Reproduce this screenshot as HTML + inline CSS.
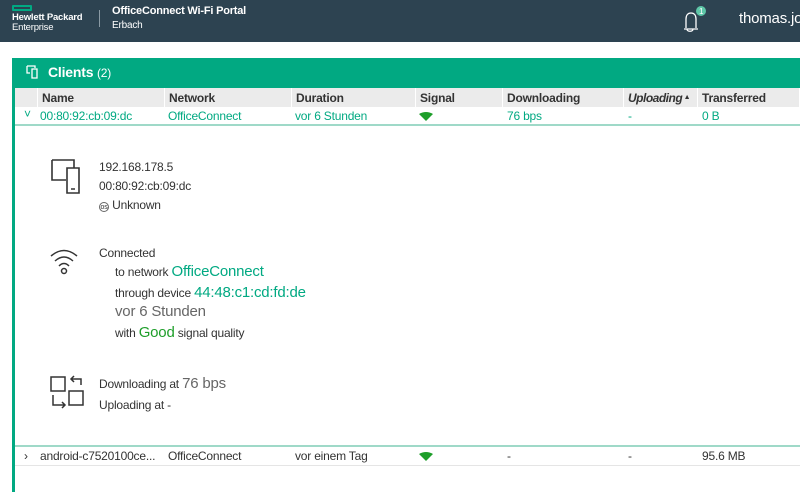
<!DOCTYPE html>
<html><head><meta charset="utf-8"><style>
*{margin:0;padding:0;box-sizing:border-box}
body{width:800px;height:492px;overflow:hidden;background:#fff;font-family:"Liberation Sans",sans-serif;font-size:12px;color:#333;position:relative;letter-spacing:-0.2px}
.hdr{position:absolute;left:0;top:0;width:800px;height:42px;background:#2d4351;color:#fff}
.abs{position:absolute;white-space:nowrap}
.panel{position:absolute;left:12px;top:58px;width:788px;height:434px;border-left:3px solid #01a982}
.band{position:absolute;left:12px;top:58px;width:788px;height:30px;background:#01a982}
.th{position:absolute;top:88px;height:19px;background:#ebebeb;border-right:1px solid #fff;font-weight:bold;color:#333;padding:3px 4px;font-size:12px;white-space:nowrap}
.td{position:absolute;padding:2px 4px;font-size:12px;white-space:nowrap}
.g{color:#01a982}
</style></head><body>
<div class="hdr">
 <div class="abs" style="left:12px;top:5px;width:20px;height:6px;border:2px solid #01a982;border-radius:1px"></div>
 <div class="abs" style="left:12px;top:13px;font-size:9.5px;font-weight:bold;line-height:10px">Hewlett Packard<br><span style="font-weight:normal">Enterprise</span></div>
 <div class="abs" style="left:99px;top:10px;width:1px;height:17px;background:#8a9aa4"></div>
 <div class="abs" style="left:112px;top:5px;font-size:11px;font-weight:bold">OfficeConnect Wi-Fi Portal</div>
 <div class="abs" style="left:112px;top:20px;font-size:10px">Erbach</div>
 <svg class="abs" style="left:678px;top:5px" width="28" height="28" viewBox="0 0 28 28"><path d="M6 24h14M9 24c0 3 6 3 6 0M8 23V14c0-4 2-6 5-6s5 2 5 6v9" fill="none" stroke="#fff" stroke-width="1.3"/><circle cx="23" cy="6" r="5" fill="#5ec7a8"/><text x="21" y="9" font-size="8" fill="#fff" font-family="Liberation Sans">1</text></svg>
 <div class="abs" style="left:739px;top:10px;font-size:15px">thomas.jo</div>
</div>
<div class="panel"></div>
<div class="band"></div>
<svg class="abs" style="left:26px;top:65px" width="16" height="14" viewBox="0 0 16 14"><path d="M1 1h8v2M1 1v7h3M6 4h5v9H6z" fill="none" stroke="#fff" stroke-width="1.3"/></svg>
<div class="abs" style="left:48px;top:64px;color:#fff;font-size:14px;font-weight:bold">Clients <span style="font-weight:normal;font-size:12px">(2)</span></div>
<div class="th" style="left:15px;width:23px"></div>
<div class="th" style="left:38px;width:127px">Name</div>
<div class="th" style="left:165px;width:127px">Network</div>
<div class="th" style="left:292px;width:124px">Duration</div>
<div class="th" style="left:416px;width:87px">Signal</div>
<div class="th" style="left:503px;width:121px">Downloading</div>
<div class="th" style="left:624px;width:74px;font-style:italic;letter-spacing:-0.5px">Uploading<span style="font-size:7px;font-style:normal;vertical-align:3px"> ▲</span></div>
<div class="th" style="left:698px;width:102px">Transferred</div>
<div class="abs" style="left:15px;top:107px;width:785px;height:19px;border-bottom:2px solid #9fd9c8"></div>
<div class="td g" style="left:20px;top:105px">˅</div>
<div class="td g" style="left:36px;top:107px">00:80:92:cb:09:dc</div>
<div class="td g" style="left:164px;top:107px">OfficeConnect</div>
<div class="td g" style="left:291px;top:107px">vor 6 Stunden</div>
<svg class="abs" style="left:419px;top:112px" width="14" height="9"><path d="M0 2Q7-2 14 2L7 9z" fill="#1e9e2a"/></svg>
<div class="td g" style="left:503px;top:107px">76 bps</div>
<div class="td g" style="left:624px;top:107px">-</div>
<div class="td g" style="left:698px;top:107px">0 B</div>
<svg class="abs" style="left:50px;top:158px" width="38" height="36" viewBox="0 0 38 36"><path d="M2 2h22v8M2 2v20h14M17 10h12v25H17zM21 31h4" fill="none" stroke="#333" stroke-width="1.6"/></svg>
<div class="abs" style="left:99px;top:158px;line-height:19px">192.168.178.5<br>00:80:92:cb:09:dc<br><span style="font-size:7px;border:1px solid #666;border-radius:50%;display:inline-block;width:10px;height:10px;text-align:center;line-height:9px">os</span> Unknown</div>
<svg class="abs" style="left:49px;top:246px" width="30" height="30" viewBox="0 0 30 30"><path d="M2 10Q15-1 28 10M6 15Q15 7 24 15M10 20Q15 15 20 20" fill="none" stroke="#333" stroke-width="1.5"/><circle cx="15" cy="25" r="2.5" fill="none" stroke="#333" stroke-width="1.5"/></svg>
<div class="abs" style="left:99px;top:246px">Connected</div>
<div class="abs" style="left:115px;top:263px">to network <span class="g" style="font-size:15px">OfficeConnect</span></div>
<div class="abs" style="left:115px;top:284px">through device <span class="g" style="font-size:15px">44:48:c1:cd:fd:de</span></div>
<div class="abs" style="left:115px;top:303px;font-size:15px;color:#666">vor 6 Stunden</div>
<div class="abs" style="left:115px;top:324px">with <span style="font-size:15px;color:#1e9e2a">Good</span> signal quality</div>
<svg class="abs" style="left:49px;top:375px" width="38" height="38" viewBox="0 0 38 38"><path d="M2 2h14v14H2zM20 30h14V16H20zM32 10V4H22M25 1l-3 3 3 3M4 20v10h12M13 27l3 3-3 3" fill="none" stroke="#333" stroke-width="1.5"/></svg>
<div class="abs" style="left:99px;top:375px">Downloading at <span style="font-size:15px;color:#666">76 bps</span></div>
<div class="abs" style="left:99px;top:398px">Uploading at -</div>
<div class="abs" style="left:15px;top:445px;width:785px;height:2px;background:#9fd9c8"></div>
<div class="abs" style="left:15px;top:447px;width:785px;height:19px;border-bottom:1px solid #e5e5e5"></div>
<div class="td" style="left:20px;top:447px">›</div>
<div class="td" style="left:36px;top:447px">android-c7520100ce...</div>
<div class="td" style="left:164px;top:447px">OfficeConnect</div>
<div class="td" style="left:291px;top:447px">vor einem Tag</div>
<svg class="abs" style="left:419px;top:452px" width="14" height="9"><path d="M0 2Q7-2 14 2L7 9z" fill="#1e9e2a"/></svg>
<div class="td" style="left:503px;top:447px">-</div>
<div class="td" style="left:624px;top:447px">-</div>
<div class="td" style="left:698px;top:447px">95.6 MB</div>
</body></html>
